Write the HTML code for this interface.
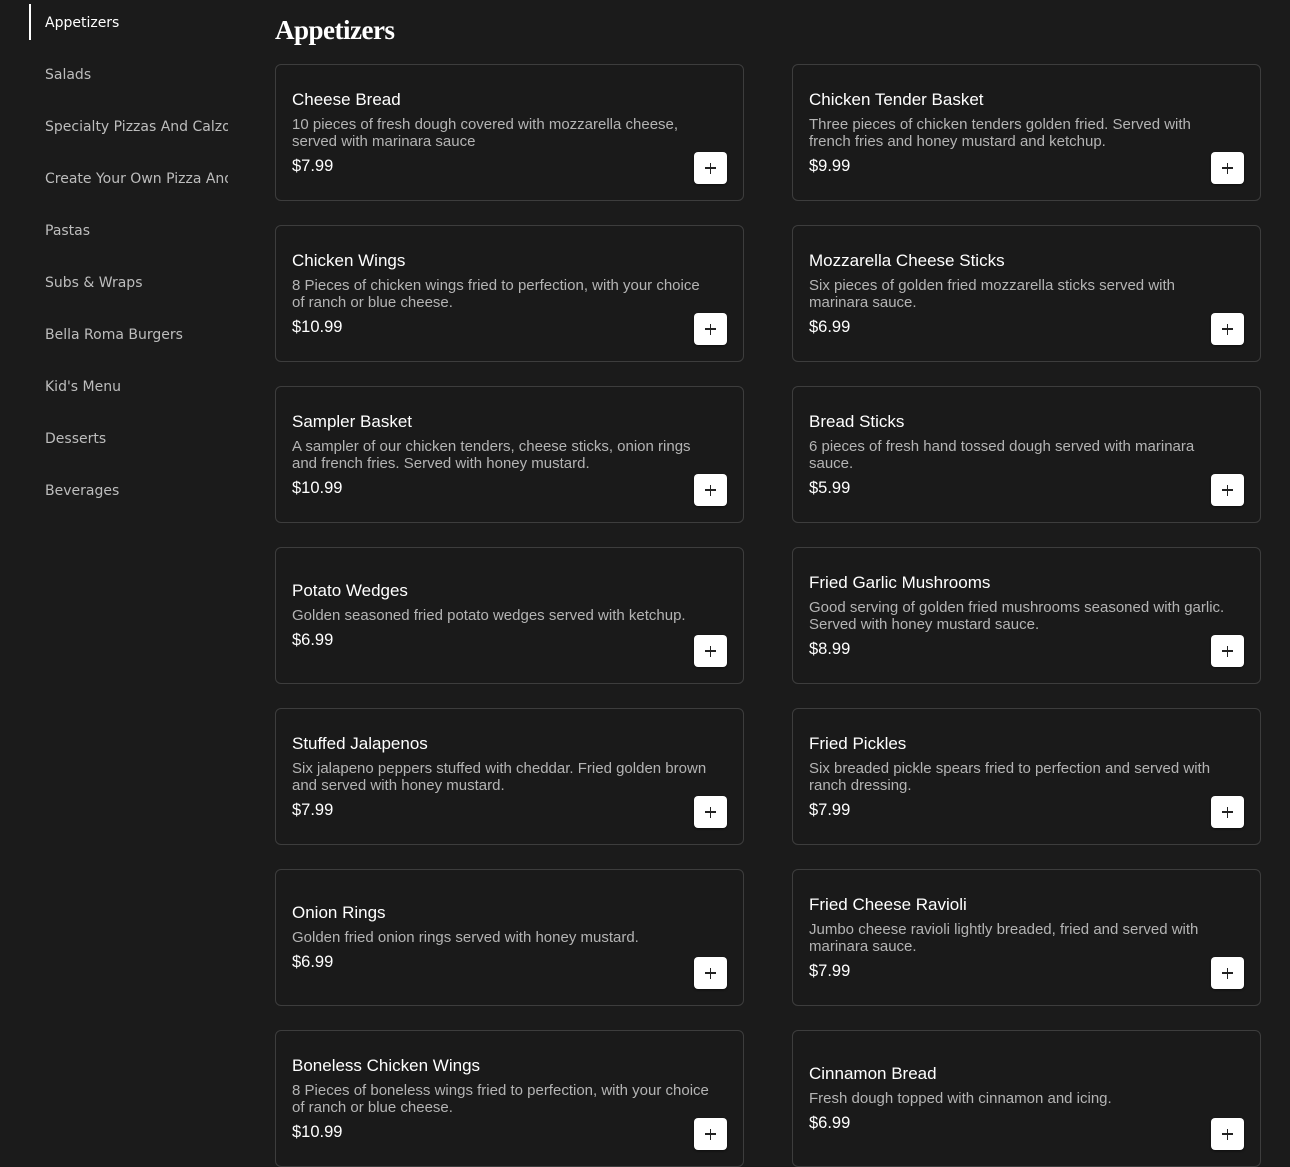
<!DOCTYPE html>
<html><head><meta charset="utf-8"><style>
*{box-sizing:border-box;margin:0;padding:0}
html,body{width:1290px;height:1090px;overflow:hidden;background:#1b1b1b;font-family:"Liberation Sans",sans-serif;}
.nav{position:absolute;left:0;top:0;width:230px}
.nav div{position:absolute;left:45px;width:183px;white-space:nowrap;overflow:hidden;font-family:"DejaVu Sans",sans-serif;font-size:14px;color:#bdbdbd;line-height:20px}
.nav .act{color:#fff}
.bar{position:absolute;left:29px;top:4px;width:2px;height:36px;background:#fff}
h1{position:absolute;left:275px;top:15px;font-family:"Liberation Serif",serif;font-weight:bold;font-size:27px;color:#fff;letter-spacing:-0.5px}
.card{position:absolute;width:469px;height:137px;border:1px solid #3d3d3d;border-radius:6px;background:#1a1a1a;display:flex;flex-direction:column;justify-content:center;padding:0 16px}
.t{font-size:17px;color:#fff;line-height:20px}
.d{font-size:15px;color:#b4b4b4;line-height:17px;margin-top:6px;padding-right:18px}
.p{font-size:16.5px;color:#fff;line-height:20px;margin-top:6px}
.b{position:absolute;right:16px;bottom:16px;width:33px;height:32px;background:#fff;border-radius:4px;box-shadow:0 1px 2px rgba(0,0,0,.5)}
.b:before{content:"";position:absolute;left:11px;top:15px;width:11px;height:1.5px;background:#222}
.b:after{content:"";position:absolute;left:15.8px;top:10.5px;width:1.5px;height:11px;background:#222}
</style></head><body>
<div class="bar"></div>
<div class="nav">
<div class="act" style="top:13px">Appetizers</div>
<div style="top:65px">Salads</div>
<div style="top:117px">Specialty Pizzas And Calzones</div>
<div style="top:169px">Create Your Own Pizza And Calzone</div>
<div style="top:221px">Pastas</div>
<div style="top:273px">Subs &amp; Wraps</div>
<div style="top:325px">Bella Roma Burgers</div>
<div style="top:377px">Kid's Menu</div>
<div style="top:429px">Desserts</div>
<div style="top:481px">Beverages</div>
</div>
<h1>Appetizers</h1>

<div class="card" style="left:275px;top:64px"><div class="t">Cheese Bread</div><div class="d">10 pieces of fresh dough covered with mozzarella cheese, served with marinara sauce</div><div class="p">$7.99</div><div class="b"></div></div>
<div class="card" style="left:792px;top:64px"><div class="t">Chicken Tender Basket</div><div class="d">Three pieces of chicken tenders golden fried. Served with french fries and honey mustard and ketchup.</div><div class="p">$9.99</div><div class="b"></div></div>

<div class="card" style="left:275px;top:225px"><div class="t">Chicken Wings</div><div class="d">8 Pieces of chicken wings fried to perfection, with your choice of ranch or blue cheese.</div><div class="p">$10.99</div><div class="b"></div></div>
<div class="card" style="left:792px;top:225px"><div class="t">Mozzarella Cheese Sticks</div><div class="d">Six pieces of golden fried mozzarella sticks served with marinara sauce.</div><div class="p">$6.99</div><div class="b"></div></div>

<div class="card" style="left:275px;top:386px"><div class="t">Sampler Basket</div><div class="d">A sampler of our chicken tenders, cheese sticks, onion rings and french fries. Served with honey mustard.</div><div class="p">$10.99</div><div class="b"></div></div>
<div class="card" style="left:792px;top:386px"><div class="t">Bread Sticks</div><div class="d">6 pieces of fresh hand tossed dough served with marinara sauce.</div><div class="p">$5.99</div><div class="b"></div></div>

<div class="card" style="left:275px;top:547px"><div class="t">Potato Wedges</div><div class="d">Golden seasoned fried potato wedges served with ketchup.</div><div class="p">$6.99</div><div class="b"></div></div>
<div class="card" style="left:792px;top:547px"><div class="t">Fried Garlic Mushrooms</div><div class="d">Good serving of golden fried mushrooms seasoned with garlic. Served with honey mustard sauce.</div><div class="p">$8.99</div><div class="b"></div></div>

<div class="card" style="left:275px;top:708px"><div class="t">Stuffed Jalapenos</div><div class="d">Six jalapeno peppers stuffed with cheddar. Fried golden brown and served with honey mustard.</div><div class="p">$7.99</div><div class="b"></div></div>
<div class="card" style="left:792px;top:708px"><div class="t">Fried Pickles</div><div class="d">Six breaded pickle spears fried to perfection and served with ranch dressing.</div><div class="p">$7.99</div><div class="b"></div></div>

<div class="card" style="left:275px;top:869px"><div class="t">Onion Rings</div><div class="d">Golden fried onion rings served with honey mustard.</div><div class="p">$6.99</div><div class="b"></div></div>
<div class="card" style="left:792px;top:869px"><div class="t">Fried Cheese Ravioli</div><div class="d">Jumbo cheese ravioli lightly breaded, fried and served with marinara sauce.</div><div class="p">$7.99</div><div class="b"></div></div>

<div class="card" style="left:275px;top:1030px"><div class="t">Boneless Chicken Wings</div><div class="d">8 Pieces of boneless wings fried to perfection, with your choice of ranch or blue cheese.</div><div class="p">$10.99</div><div class="b"></div></div>
<div class="card" style="left:792px;top:1030px"><div class="t">Cinnamon Bread</div><div class="d">Fresh dough topped with cinnamon and icing.</div><div class="p">$6.99</div><div class="b"></div></div>
</body></html>
